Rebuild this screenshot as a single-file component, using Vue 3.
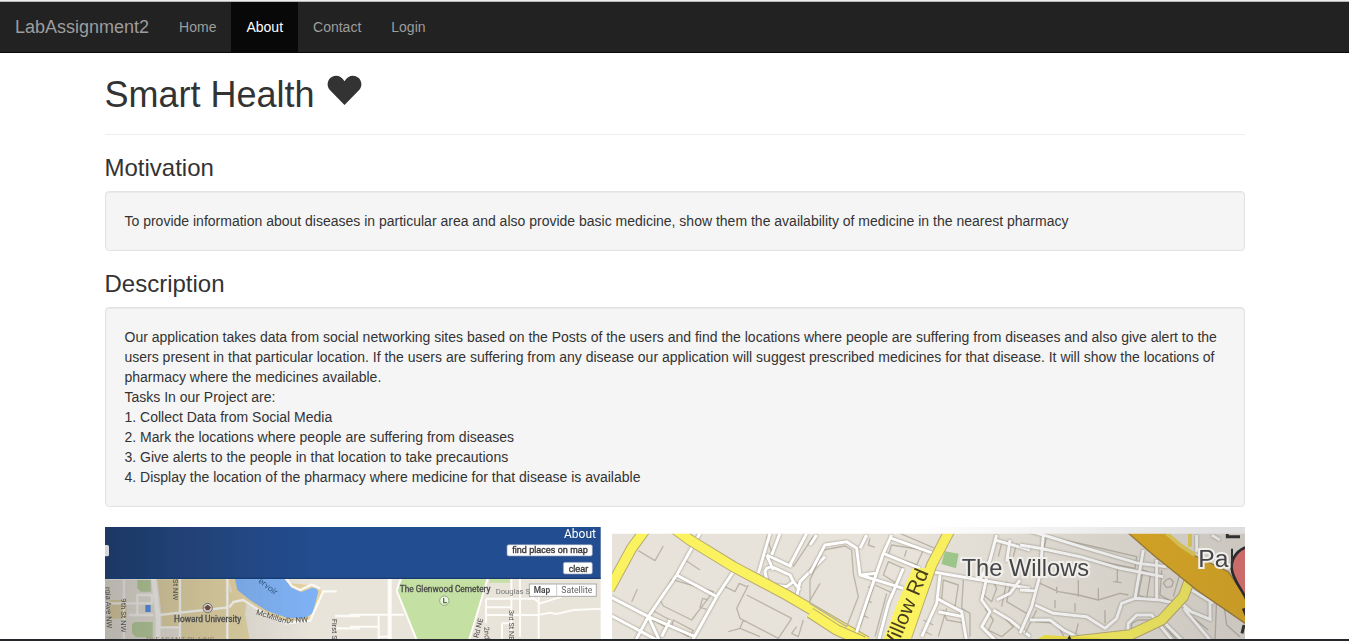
<script setup>
const links = [
  { label: 'Home', href: '#home' },
  { label: 'About', href: '#about', active: true },
  { label: 'Contact', href: '#contact' },
  { label: 'Login', href: '#login' },
]

const tasks = [
  'Collect Data from Social Media',
  'Mark the locations where people are suffering from diseases',
  'Give alerts to the people in that location to take precautions',
  'Display the location of the pharmacy where medicine for that disease is available',
]
</script>

<template>
  <div class="page">
    <nav class="navbar">
      <a class="brand" href="#">LabAssignment2</a>
      <a
        v-for="link in links"
        :key="link.label"
        class="nav-link"
        :class="{ active: link.active }"
        :href="link.href"
      >{{ link.label }}</a>
    </nav>

    <main class="container">
      <h1>
        Smart Health
        <svg class="heart" viewBox="0 0 36 36" aria-hidden="true">
          <path d="M17.5 33 2.6 17.7C-.5 14 .2 8.6 3.6 5.7 8 2 14.5 3.3 17.5 9.2 20.5 3.3 27 2 31.4 5.7 34.8 8.6 35.5 14 32.4 17.7Z" />
        </svg>
      </h1>
      <hr />

      <h3>Motivation</h3>
      <div class="well">
        To provide information about diseases in particular area and also provide basic medicine, show them the availability of medicine in the nearest pharmacy
      </div>

      <h3>Description</h3>
      <div class="well">
        Our application takes data from social networking sites based on the Posts of the users and find the locations where people are suffering from diseases and also give alert to the users present in that particular location. If the users are suffering from any disease our application will suggest prescribed medicines for that disease. It will show the locations of pharmacy where the medicines available.
        <div>Tasks In our Project are:</div>
        <div v-for="(task, i) in tasks" :key="task">{{ i + 1 }}. {{ task }}</div>
      </div>

      <svg class="maps" viewBox="0 0 3420 345" role="img" aria-label="Maps of disease locations">
        <defs>
          <linearGradient id="banner" x1="0" x2="1" y1="0" y2="0">
            <stop offset="0" stop-color="#1e3863" />
            <stop offset=".22" stop-color="#21447c" />
            <stop offset=".42" stop-color="#244d90" />
            <stop offset="1" stop-color="#244d90" />
          </linearGradient>
          <linearGradient id="shade" x1="0" x2="1" y1="0" y2="0">
            <stop offset="0" stop-color="#444" stop-opacity=".3" />
            <stop offset="1" stop-color="#444" stop-opacity="0" />
          </linearGradient>
          <linearGradient id="shade-right" x1="0" x2="1" y1="0" y2="0">
            <stop offset="0" stop-color="#555" stop-opacity="0" />
            <stop offset="1" stop-color="#555" stop-opacity=".2" />
          </linearGradient>
          <clipPath id="left-clip"><rect width="1487" height="345" /></clipPath>
          <clipPath id="right-clip"><rect x="1521" y="20" width="1899" height="325" /></clipPath>
          <filter id="soft" x="0" y="0" width="1" height="1"><feGaussianBlur stdDeviation="1.8" /></filter>
        </defs>

        <!-- City map with its banner -->
        <g clip-path="url(#left-clip)">
          <g filter="url(#soft)">
            <rect width="1487" height="345" fill="#e9e4da" />
            <g transform="translate(-15 -21)">
              <path fill="#e2d3a3" d="M172 175H385L390 215 440 250 435 280 450 365H240V325H185V285ZM28 240H80V296H28Z" />
              <path fill="#b9d09a" d="M112 180H152V215H122L112 205ZM96 312 105 306H158V352H108L96 340Z" />
              <path fill="#4f8fe6" d="M136 255H152V276H136Z" />
              <path fill="#e6d3a0" d="M386 175 398 225 440 250 500 285 570 304 630 300 668 225 660 205 640 196Z" />
              <path fill="#7fb2f5" d="M404 170 412 210 450 240 500 272 560 293 610 296 638 280 655 215 650 206 636 203 604 216 575 203 548 170Z" />
              <g fill="none" stroke="#fbfaf6" stroke-width="7" stroke-linejoin="round">
                <path stroke-width="15" d="M160 170 174 290V365" />
                <path d="M15 250H110M112 285V225H156V250H112M72 180V365M86 285H160M240 170V365M176 285 385 262M382 170V365M388 262 400 246 430 240 500 285 560 310 630 302 670 214H710M180 322H240M555 170 575 198 600 210 635 194 660 205M705 288H780M710 325H780" />
              </g>
            </g>
            <g transform="translate(735 -21)">
              <path fill="#c4e0a2" d="M153 176H409L355 365H202L140 212ZM418 176H480V188H418Z" />
              <g fill="none" stroke="#fdfcf8" stroke-width="6">
                <path stroke-width="12" d="M119 176V365" />
                <path d="M140 212 202 365M140 212 153 176M413 176 356 365M0 284H162M0 320H84M86 288V365M408 236H560M410 262H482M405 285H565L600 278 620 282 670 270 755 266M484 176V365M545 230 570 250 635 230M566 210V365M455 310H482M456 310V365M510 176V350M408 236V310M84 350H119" />
              </g>
            </g>
            <g transform="translate(735 -21)">
              <rect x="538" y="192" width="201" height="37" fill="#fff" stroke="#aaa" stroke-width="3" />
              <path d="M620 192V229" stroke="#ccc" stroke-width="3" />
              <circle cx="283" cy="242" r="14" fill="#eef4e8" stroke="#8eaa79" stroke-width="3" />
              <path fill="none" stroke="#4b8138" stroke-width="4" d="M281 234V248H291" />
            </g>
            <circle cx="308" cy="243" r="14" fill="#e8e5de" stroke="#777" stroke-width="3" />
            <path fill="#75463c" d="M298 241 308 233 318 241 312 250H304Z" />
            <g class="map-text">
              <text x="1286" y="198" font-size="25" font-weight="700">Map</text>
              <text x="1369" y="198" font-size="26" fill="#666">Satellite</text>
              <text x="884" y="196" font-size="25" class="outlined">The Glenwood Cemetery</text>
              <text x="1172" y="200" font-size="23" fill="#777">Douglas S</text>
              <text x="207" y="286" font-size="25" class="outlined">Howard University</text>
              <text x="123" y="345" font-size="24" fill="#a39672">PLEASANT PLAINS</text>
              <text transform="translate(458 165) rotate(38)" font-size="26" fill="#365f91">ervoir</text>
              <text transform="translate(452 262) rotate(17)" font-size="23">McMillan</text>
              <text transform="translate(544 289) rotate(-3)" font-size="23">Dr NW</text>
              <text transform="translate(203 138) rotate(90)" font-size="23">h St NW</text>
              <text transform="translate(47 214) rotate(90)" font-size="23">9th St NW</text>
              <text transform="translate(1 180) rotate(88)" font-size="23">rgia Ave NW</text>
              <text transform="translate(682 276) rotate(90)" font-size="22">First S</text>
              <text transform="translate(1120 334) rotate(-76)" font-size="22">Rd NE</text>
              <text transform="translate(1137 300) rotate(86)" font-size="22">2nd</text>
              <text transform="translate(1213 249) rotate(90)" font-size="22">3rd St NE</text>
            </g>
            <rect y="157" width="620" height="190" fill="url(#shade)" />
            <rect width="1487" height="155" fill="url(#banner)" />
            <path d="M0 154H1487" stroke="#173a70" stroke-width="4" />
            <rect x="-20" y="54" width="32" height="34" rx="5" fill="#d5d8dc" />
            <rect x="1206" y="53" width="256" height="34" rx="5" fill="#fff" stroke="#8799b7" stroke-width="2" />
            <rect x="1375" y="106" width="87" height="35" rx="5" fill="#fff" stroke="#8799b7" stroke-width="2" />
            <g class="map-text">
              <text x="1377" y="34" font-size="36" fill="#fff">About</text>
              <text x="1222" y="78" font-size="27" class="inked">find places on map</text>
              <text x="1391" y="134" font-size="27" class="inked">clear</text>
            </g>
          </g>
        </g>

        <!-- Street map around The Willows -->
        <rect x="2420" width="1000" height="345" fill="url(#shade-right)" />
        <g clip-path="url(#right-clip)">
          <g filter="url(#soft)">
            <rect x="1500" width="1920" height="345" fill="#e8e3da" />
            <g transform="translate(1485 -21)">
              <g class="lane">
                <path d="M115 92 165 122 190 78M95 245 112 208M215 178 180 240 190 258 275 300 340 215ZM270 90 240 145M255 120 300 150M380 180 375 200 405 215 418 190 440 200M445 195 410 265 420 295 535 355 575 295 440 225M430 300 420 325 385 335M500 50 515 95M640 50 580 140M325 240 308 235 300 262 320 268M420 325 480 350M590 320 575 340 595 350 610 300M660 190 625 250M155 270 210 300 195 320 150 295ZM220 300 280 332 265 350 215 320Z" />
              </g>
              <g class="street">
                <path d="M30 230 145 290 285 350M30 285 115 330M300 40 230 165 145 290 105 365M230 165 350 230M400 155 350 230 275 365M145 290 180 365M105 325 180 365M210 300 185 350M510 40 475 160M500 105 575 140M500 105 520 150M540 40 515 105M620 40 570 135M675 110 600 185 590 230M495 155 500 180 520 195 560 200 580 185 570 165 515 140 500 145ZM580 185 600 210" />
              </g>
              <path class="major-edge" d="M135 30 95 85 28 208M215 20 270 60 400 140 560 225 800 365" />
              <path class="major" d="M135 30 95 85 28 208M215 20 270 60 400 140 560 225 800 365" />
            </g>
            <g transform="translate(2115 -21)">
              <g class="lane">
                <path d="M40 90 0 180 0 250 110 320 145 230 130 160 125 90 105 78ZM235 125 220 165 260 190 280 145ZM190 200 150 320M175 200 190 208M170 240 185 248M160 285 175 294M245 75 235 105 320 135 340 90ZM290 90 283 110M270 40 375 85M195 195 250 220M230 220 195 350M400 180 395 240 435 260 445 195ZM410 265 385 350M460 180 455 265 480 280 480 350M530 190 515 220 545 245 560 205 550 185M525 265 550 300 535 330 575 350 610 320 560 270M600 200 590 245 650 280M575 70 565 110M590 185 575 260M620 70 610 110M400 270 410 300 465 310M340 300 370 315M335 330 365 345M180 55 175 75 195 82" />
              </g>
              <g class="street">
                <path d="M0 160 45 75 110 65 140 85 145 125 150 165 200 160M245 45 220 100 175 230 130 365M220 100 330 145M245 55 370 100M150 165 280 205M280 145 235 250 205 365M365 155 480 175 660 205M560 45 540 120 510 180M555 60 660 90M390 165 380 250 335 350M380 235 455 275 470 365M530 175 515 240 540 275 515 320 560 365M550 270 600 300 660 350M560 240 600 220 630 180M20 45 0 75M385 275 460 290M600 60 590 125M170 45 150 85" />
              </g>
              <path class="major-edge" d="M425 20 365 135 290 350" />
              <path class="major-edge" d="M0 278 80 330 160 365" />
              <path class="major" d="M425 20 365 135 290 350M0 278 80 330 160 365" />
              <path fill="#fbf25e" d="M308 145H372L310 330 298 365H218L262 250Z" />
              <path fill="#9fc78b" d="M405 94 446 101 438 145 394 132Z" />
            </g>
            <g transform="translate(2745 -21)">
              <g class="lane">
                <path d="M80 50 70 90 345 145 350 110 200 75ZM60 190 115 215 175 225 235 240 300 220 325 225M175 180V230M165 250V275M105 240V265M255 270V310M110 200V220M280 185 305 188M292 145V185M300 145 285 143M235 205V240M50 270 15 340M45 305 110 310 140 365M175 310 165 350 260 350M370 150 355 225 380 235 392 160ZM425 150 420 225 455 245M440 178 430 190 440 203 455 200 460 185 450 175ZM480 160 460 230M335 350 335 310 355 300 390 300M510 285 565 330M440 325 475 365M590 230 585 365M525 215 565 235M610 240 620 315 660 350" />
              </g>
              <g class="street">
                <path d="M0 25 70 45 200 85 355 130 440 140M0 75 60 85 180 110 300 145 430 170M70 40 60 165 35 260 0 340M370 90 345 235M410 120 410 240M0 210 50 213M45 255 100 280 200 290 255 325 290 295 305 250 345 235 420 240 490 255 520 280M30 300 90 300 130 330 200 365M320 365 325 310 350 285 395 285 460 365M490 265 575 300M495 270 575 365M435 310 490 365M515 210 580 250M570 225 570 300M530 45V95M600 60 575 45" />
              </g>
              <path class="major-edge" d="M520 150 490 230 425 300 330 345 150 365" />
              <path class="major" d="M520 150 490 230 425 300 330 345 150 365" />
              <path fill="#f2e43e" d="M35 365 75 345 150 350 240 355 240 365Z" />
              <path fill="#e3ac1c" stroke="#9c7a36" stroke-width="4" d="M320 35H435L520 105 625 155 690 250V320L530 210 400 105Z" />
              <path fill="none" stroke="#ead253" stroke-width="12" d="M440 40 480 75 525 105M510 40V80" />
              <path fill="#e9716f" stroke="#222" stroke-width="8" d="M690 80C655 83 633 115 635 145 638 180 665 205 680 240V80Z" />
              <path fill="none" stroke="#292929" stroke-width="9" d="M622 42V50H660M670 265 680 290M672 315 666 340" />
            </g>
            <rect x="2420" width="1000" height="345" fill="url(#shade-right)" />
            <g class="map-text">
              <text x="2570" y="147" font-size="71" class="place">The Willows</text>
              <text x="3280" y="120" font-size="74" class="place">Pa</text>
              <path d="M3381 65V120" stroke="#333" stroke-width="6" />
              <text transform="translate(2364 390) rotate(-67)" font-size="62" class="road-name">Willow Rd</text>
            </g>
            <path fill="#332f12" d="M2884 342 2893 325 2902 342Z" />
          </g>
        </g>
      </svg>
    </main>
    <div class="bottom-edge"></div>
  </div>
</template>

<style>
html,
body {
  margin: 0;
  overflow: hidden;
  background: #fff;
}
</style>

<style scoped>
* {
  box-sizing: border-box;
}
.page {
  height: 100vh;
  overflow: hidden;
  border-top: 1px solid #eee;
  color: #333;
  font: 14px/20px "Liberation Sans", Arial, sans-serif;
}
.navbar {
  display: flex;
  height: 52px;
  background: #222;
  border-top: 1px solid #b4baba;
  border-bottom: 1px solid #080808;
}
.brand,
.nav-link {
  padding: 15px;
  color: #9d9d9d;
  text-decoration: none;
}
.brand {
  font-size: 18px;
}
.nav-link.active {
  color: #fff;
  background: #080808;
}
.container {
  max-width: 1170px;
  margin: 0 auto;
  padding: 2px 15px 0;
}
h1,
h3 {
  font-weight: 500;
}
h1 {
  display: flex;
  gap: 12px;
  margin: 20px 0 0;
  font-size: 36px;
  line-height: 40px;
}
h3 {
  margin: 20px 0 10px;
  font-size: 24px;
  line-height: 26px;
}
hr {
  height: 1px;
  margin: 19px 0 20px;
  border: 0;
  background: #eee;
}
.heart {
  width: 36px;
  height: 36px;
  margin-top: -3px;
  fill: #333;
}
.well {
  margin-bottom: 20px;
  padding: 19px;
  background: #f5f5f5;
  border: 1px solid #e3e3e3;
  border-radius: 4px;
  box-shadow: inset 0 1px 1px rgba(0, 0, 0, 0.05);
}
.maps {
  display: block;
  width: 100%;
}
.map-text {
  fill: #4d4d4d;
  font-family: Roboto, "Liberation Sans", sans-serif;
}
.inked {
  fill: #333;
  stroke: #333;
  stroke-width: 1;
  font-family: "Liberation Sans", Arial, sans-serif;
}
.outlined {
  stroke: #4d4d4d;
  stroke-width: 1;
}
.place {
  fill: #45454a;
  stroke: #f1efe9;
  stroke-width: 12;
  paint-order: stroke;
  font-family: "Liberation Sans", Arial, sans-serif;
}
.road-name {
  fill: #463d20;
  font-family: "Liberation Sans", Arial, sans-serif;
}
.street {
  fill: none;
  stroke: #fff;
  stroke-width: 9;
  stroke-linejoin: round;
  filter: drop-shadow(0 0 3px #8f8878);
}
.lane {
  fill: none;
  stroke: #bbb5a9;
  stroke-width: 4;
  stroke-linejoin: round;
}
.major-edge {
  fill: none;
  stroke: #b9ab72;
  stroke-width: 34;
}
.major {
  fill: none;
  stroke: #fbf25e;
  stroke-width: 28;
}
.bottom-edge {
  position: fixed;
  right: 0;
  bottom: 0;
  left: 0;
  height: 2px;
  background: #24282c;
}
</style>
